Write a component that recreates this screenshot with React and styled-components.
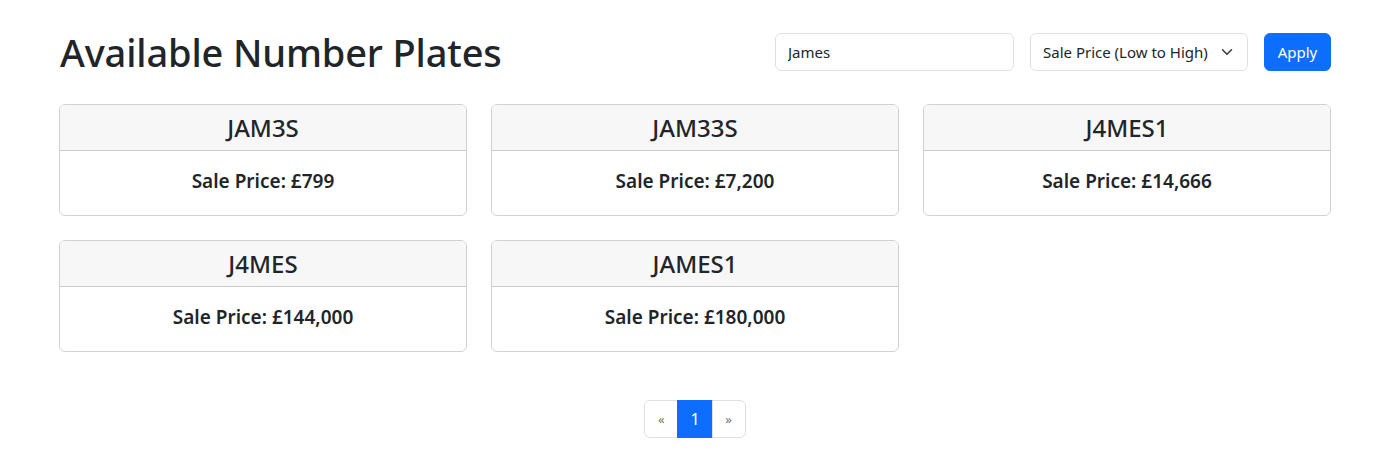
import React from "react";
import styled, { createGlobalStyle } from "styled-components";

const GlobalStyle = createGlobalStyle`
  body {
    margin: 0;
    background: #fff;
    color: #212529;
    font-family: "Noto Sans", "Open Sans", sans-serif;
    font-size: 16px;
  }
  * { box-sizing: border-box; }
`;

const Page = styled.div`
  width: 1272px;
  margin-left: 59px;
  padding-top: 28px;
`;

const HeaderRow = styled.div`
  display: flex;
  align-items: center;
  justify-content: space-between;
  height: 48px;
`;

const Title = styled.h1`
  margin: 0 0 0 1px;
  font-size: 38px;
  font-weight: 500;
  letter-spacing: -0.15px;
  line-height: 48px;
`;

const Filters = styled.form`
  display: flex;
  align-items: center;
  gap: 16px;
`;

const SearchInput = styled.input`
  width: 239px;
  height: 38px;
  padding: 6px 12px;
  border: 1px solid #dee2e6;
  border-radius: 6px;
  font: inherit;
  font-size: 15px;
  color: #212529;
`;

const SortSelect = styled.div`
  position: relative;
  width: 218px;
  height: 38px;
  padding: 6px 36px 6px 12px;
  border: 1px solid #dee2e6;
  border-radius: 6px;
  font-size: 15px;
  line-height: 24px;
  white-space: nowrap;
`;

const Chevron = styled.svg`
  position: absolute;
  right: 12px;
  top: 12px;
  width: 16px;
  height: 12px;
`;

const ApplyButton = styled.button`
  height: 38px;
  width: 67px;
  padding: 6px 12px;
  border: 1px solid #0d6efd;
  border-radius: 6px;
  background: #0d6efd;
  color: #fff;
  font: inherit;
  font-size: 15px;
`;

const Grid = styled.div`
  display: grid;
  grid-template-columns: repeat(3, 1fr);
  gap: 24px;
  margin-top: 28px;
`;

const Card = styled.div`
  border: 1px solid rgba(0, 0, 0, 0.175);
  border-radius: 6px;
  overflow: hidden;
  text-align: center;
`;

const CardHeader = styled.div`
  background: #f7f7f7;
  border-bottom: 1px solid rgba(0, 0, 0, 0.175);
  padding: 8px 16px;
  font-size: 24px;
  font-weight: 500;
  line-height: 29px;
`;

const CardBody = styled.div`
  padding: 14px 16px 18px;
  font-size: 19px;
  font-weight: 600;
  line-height: 32px;
`;

const Pager = styled.ul`
  display: flex;
  justify-content: center;
  list-style: none;
  margin: 48px 0 0 1px;
  padding: 0;
`;

const PageItem = styled.li`
  min-width: 34px;
  height: 38px;
  padding: 6px 12px;
  border: 1px solid ${(p) => (p.$active ? "#0d6efd" : "#dee2e6")};
  margin-left: -1px;
  background: ${(p) => (p.$active ? "#0d6efd" : "#fff")};
  color: ${(p) => (p.$active ? "#fff" : "#6c757d")};
  font-size: ${(p) => (p.$active ? "16px" : "13px")};
  line-height: 24px;
  text-align: center;
  &:first-child {
    border-radius: 6px 0 0 6px;
  }
  &:last-child {
    border-radius: 0 6px 6px 0;
  }
`;

const plates = [
  { reg: "JAM3S", price: "£799" },
  { reg: "JAM33S", price: "£7,200" },
  { reg: "J4MES1", price: "£14,666" },
  { reg: "J4MES", price: "£144,000" },
  { reg: "JAMES1", price: "£180,000" },
];

export default function App() {
  return (
    <>
      <GlobalStyle />
      <Page>
        <HeaderRow>
          <Title>Available Number Plates</Title>
          <Filters onSubmit={(e) => e.preventDefault()}>
            <SearchInput defaultValue="James" />
            <SortSelect>
              Sale Price (Low to High)
              <Chevron viewBox="0 0 16 16">
                <path
                  fill="none"
                  stroke="#343a40"
                  strokeLinecap="round"
                  strokeLinejoin="round"
                  strokeWidth="2"
                  d="m2 5 6 6 6-6"
                />
              </Chevron>
            </SortSelect>
            <ApplyButton type="submit">Apply</ApplyButton>
          </Filters>
        </HeaderRow>
        <Grid>
          {plates.map((p) => (
            <Card key={p.reg}>
              <CardHeader>{p.reg}</CardHeader>
              <CardBody>Sale Price: {p.price}</CardBody>
            </Card>
          ))}
        </Grid>
        <Pager>
          <PageItem>«</PageItem>
          <PageItem $active>1</PageItem>
          <PageItem>»</PageItem>
        </Pager>
      </Page>
    </>
  );
}
